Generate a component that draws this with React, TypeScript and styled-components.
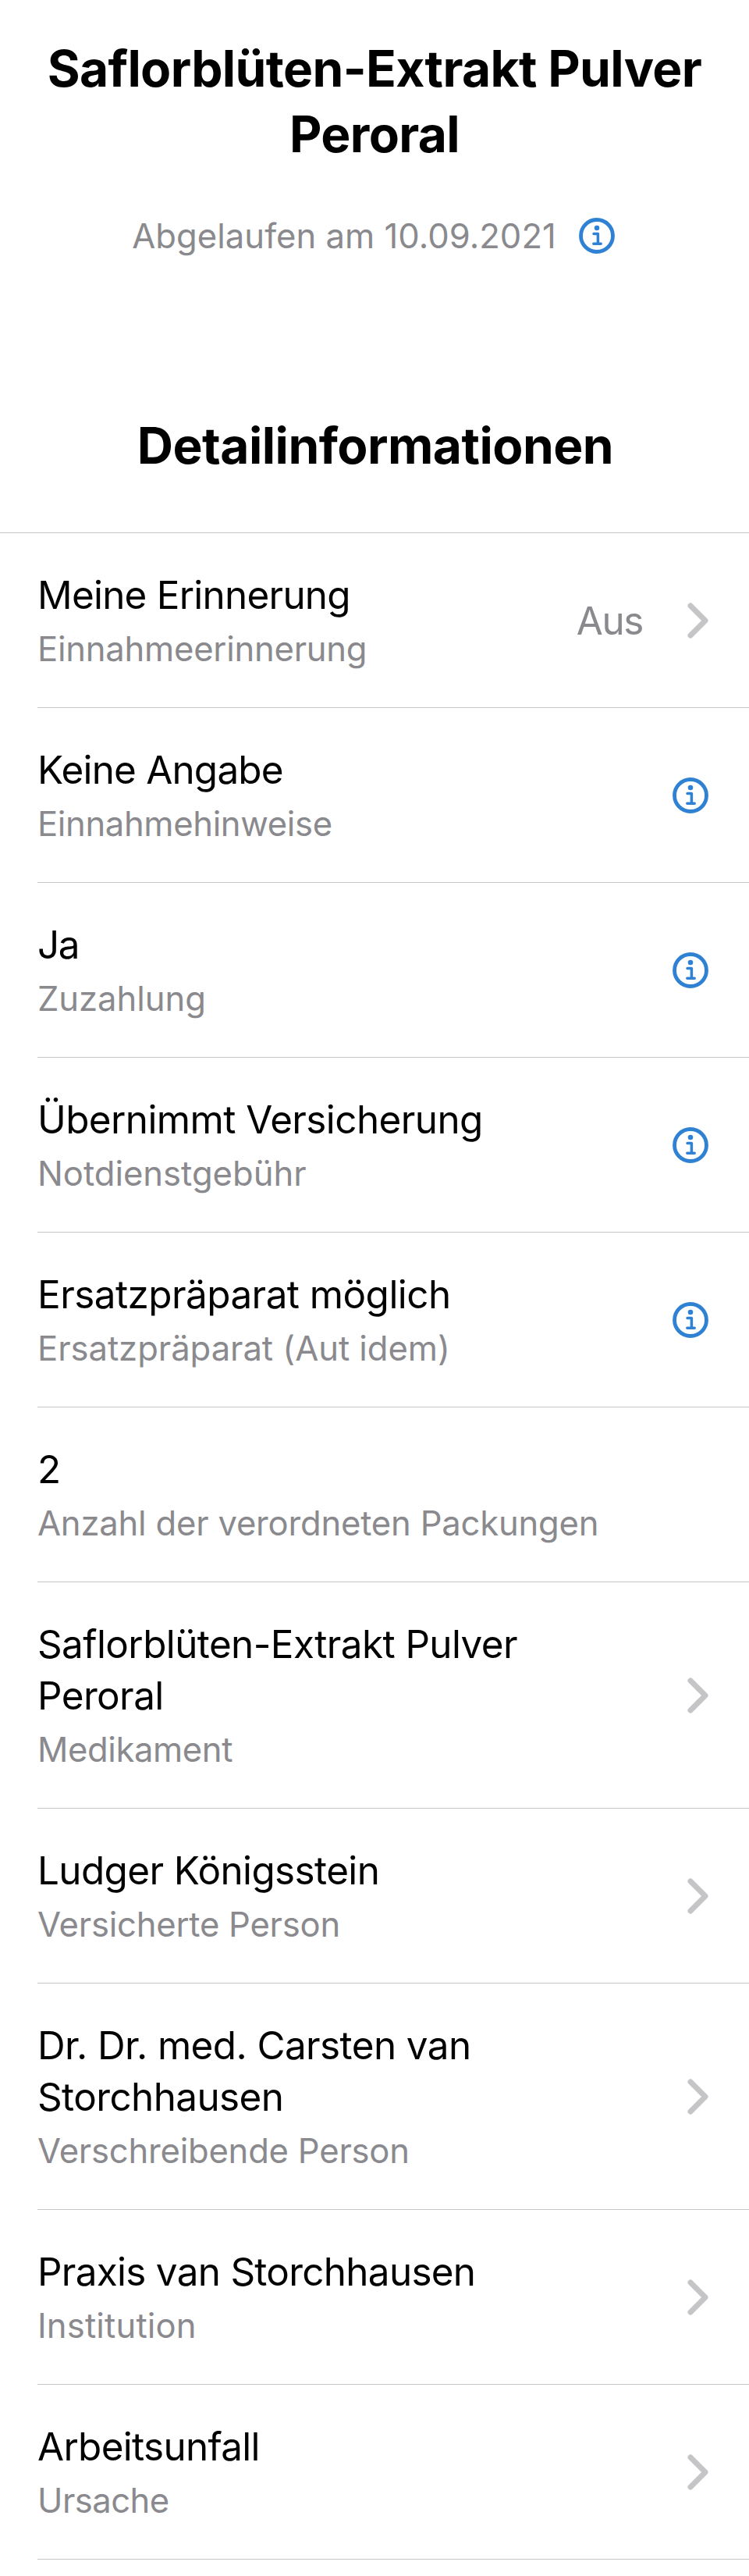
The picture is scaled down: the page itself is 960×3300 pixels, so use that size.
import React from 'react';
import styled, { createGlobalStyle } from 'styled-components';

const GlobalStyle = createGlobalStyle`
  * { box-sizing: border-box; }
  body {
    margin: 0;
    background: #ffffff;
    font-family: "Inter", "Liberation Sans", sans-serif;
    color: #000000;
  }
`;

const Page = styled.main`
  width: 960px;
  height: 3300px;
  overflow: hidden;
  background: #ffffff;
`;

const Header = styled.header`
  display: flex;
  flex-direction: column;
  align-items: center;
  padding: 46px 40px 0;
`;

const Heading = styled.h1<{ $tracking: number }>`
  margin: 0;
  font-size: 64px;
  line-height: 84px;
  font-weight: 700;
  text-align: center;
  letter-spacing: ${(p) => p.$tracking}px;
`;

const Status = styled.div`
  display: flex;
  align-items: center;
  gap: 29px;
  margin-top: 61px;
  padding-right: 3px;
  font-size: 43.6px;
  line-height: 55px;
  letter-spacing: 0.027px;
  color: #8a8a8e;

  svg {
    margin-bottom: 1px;
  }
`;

const SectionHeader = styled.div`
  display: flex;
  justify-content: center;
  padding: 199px 0 69px 2px;
  border-bottom: 1px solid #c6c6c8;
`;

const List = styled.ul`
  margin: 0;
  padding: 0 0 0 48px;
  list-style: none;
`;

const Row = styled.li`
  display: flex;
  align-items: center;
  justify-content: space-between;
  padding-right: 52px;
  border-bottom: 1px solid #c6c6c8;
`;

const RowText = styled.div`
  display: flex;
  flex-direction: column;
  gap: 10px;
  max-width: 760px;
  padding: 46px 0 47px;
`;

const Value = styled.span<{ $tracking: number }>`
  font-size: 49.4px;
  line-height: 66px;
  letter-spacing: ${(p) => p.$tracking}px;
`;

const Label = styled.span<{ $tracking: number }>`
  font-size: 43.6px;
  line-height: 54px;
  color: #8a8a8e;
  letter-spacing: ${(p) => p.$tracking}px;
`;

const Accessory = styled.div<{ $kind?: 'info' | 'chevron' }>`
  display: flex;
  align-items: center;
  gap: 57px;
  padding-top: ${(p) => (p.$kind === 'info' ? 1 : 0)}px;
`;

const State = styled.span`
  padding-top: 1px;
  font-size: 49.4px;
  line-height: 66px;
  color: #8a8a8e;
  letter-spacing: -1.4px;
`;

const InfoIcon = () => (
  <svg width="46" height="46" viewBox="0 0 46 46" fill="none" stroke="#2f82d3">
    <circle cx="23" cy="23" r="20.5" strokeWidth="4.8" />
    <circle cx="23" cy="13" r="3.3" fill="#2f82d3" stroke="none" />
    <path d="M19 20.6H24.4V33.2M18.8 33.2H28.2" strokeWidth="3.5" strokeLinecap="round" strokeLinejoin="round" />
  </svg>
);

const Chevron = () => (
  <svg width="27" height="46" viewBox="0 0 27 46" fill="none" stroke="#c5c5c7">
    <path d="M4 4L23 23L4 42" strokeWidth="7" strokeLinecap="round" strokeLinejoin="round" />
  </svg>
);

type Entry = {
  value: string;
  label: string;
  tracking: [number, number];
  accessory?: 'info' | 'chevron';
  state?: string;
};

const entries: Entry[] = [
  { value: 'Meine Erinnerung', label: 'Einnahmeerinnerung', tracking: [-0.74, -0.25], accessory: 'chevron', state: 'Aus' },
  { value: 'Keine Angabe', label: 'Einnahmehinweise', tracking: [-0.78, -0.36], accessory: 'info' },
  { value: 'Ja', label: 'Zuzahlung', tracking: [-1.5, -0.05], accessory: 'info' },
  { value: 'Übernimmt Versicherung', label: 'Notdienstgebühr', tracking: [-0.574, -0.02], accessory: 'info' },
  { value: 'Ersatzpräparat möglich', label: 'Ersatzpräparat (Aut idem)', tracking: [-0.54, -0.05], accessory: 'info' },
  { value: '2', label: 'Anzahl der verordneten Packungen', tracking: [0, -0.21] },
  { value: 'Saflorblüten-Extrakt Pulver Peroral', label: 'Medikament', tracking: [-0.585, -0.4], accessory: 'chevron' },
  { value: 'Ludger Königsstein', label: 'Versicherte Person', tracking: [-0.594, -0.24], accessory: 'chevron' },
  { value: 'Dr. Dr. med. Carsten van Storchhausen', label: 'Verschreibende Person', tracking: [-0.58, -0.23], accessory: 'chevron' },
  { value: 'Praxis van Storchhausen', label: 'Institution', tracking: [-0.7, 0.15], accessory: 'chevron' },
  { value: 'Arbeitsunfall', label: 'Ursache', tracking: [-0.68, -0.55], accessory: 'chevron' },
];

export default function App() {
  return (
    <>
      <GlobalStyle />
      <Page>
        <Header>
          <Heading $tracking={-0.635}>Saflorblüten-Extrakt Pulver Peroral</Heading>
          <Status>
            <span>Abgelaufen am 10.09.2021</span>
            <InfoIcon />
          </Status>
        </Header>
        <SectionHeader>
          <Heading as="h2" $tracking={-0.53}>Detailinformationen</Heading>
        </SectionHeader>
        <List>
          {entries.map((e) => (
            <Row key={e.label}>
              <RowText>
                <Value $tracking={e.tracking[0]}>{e.value}</Value>
                <Label $tracking={e.tracking[1]}>{e.label}</Label>
              </RowText>
              <Accessory $kind={e.accessory}>
                {e.state && <State>{e.state}</State>}
                {e.accessory === 'info' && <InfoIcon />}
                {e.accessory === 'chevron' && <Chevron />}
              </Accessory>
            </Row>
          ))}
        </List>
      </Page>
    </>
  );
}
